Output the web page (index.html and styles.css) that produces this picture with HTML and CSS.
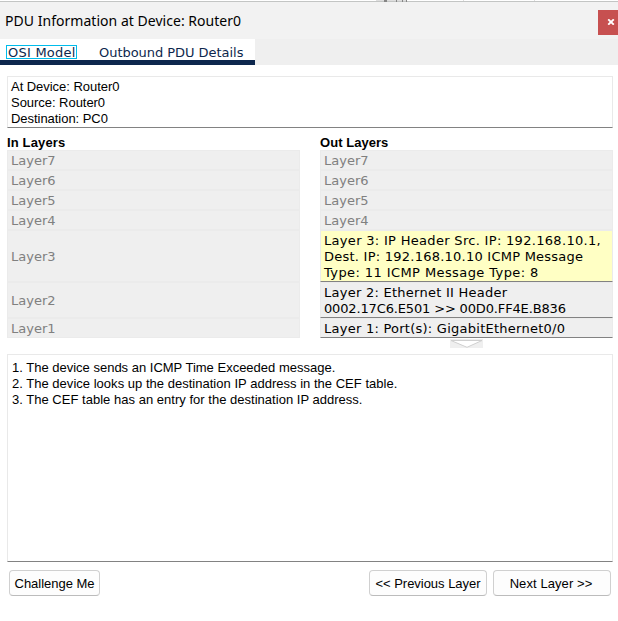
FILE: index.html
```
<!DOCTYPE html>
<html lang="en">
<head>
<meta charset="utf-8">
<title>PDU Information at Device: Router0</title>
<link rel="stylesheet" href="styles.css">
</head>
<body>
<svg class="top-edge" width="618" height="2" viewBox="0 0 618 2" shape-rendering="crispEdges">
  <path fill="#fff" d="M0 0h618v1H0z"/>
  <path fill="#c3c5c4" d="M0 1h618v1H0z"/>
  <path fill="#dedede" d="M376 0h30v1h-30zM463 0h1v1h-1zM534 0h1v1h-1z"/>
  <path fill="#858585" d="M384 0h3v2h-3zM396 0h1v2h-1zM402 0h1v2h-1zM406 0h1v2h-1z"/>
</svg>
<header class="titlebar">
  <h1 class="title">PDU Information at Device: Router0</h1>
  <button class="close" aria-label="Close">
    <svg width="8" height="6" viewBox="0 0 8 6"><path d="M1.2.3 6.8 5.7M6.8.3 1.2 5.7" stroke="#fff" stroke-width="1.8"/></svg>
  </button>
</header>
<nav class="tabbar">
  <div class="tabs">
    <span class="tab tab-osi">OSI Model</span>
    <span class="tab tab-out">Outbound PDU Details</span>
  </div>
</nav>
<main class="content">
  <section class="box info">
    <p>At Device: Router0</p>
    <p>Source: Router0</p>
    <p>Destination: PC0</p>
  </section>
  <div class="columns">
    <section>
      <h2 class="heading heading-in">In Layers</h2>
      <div class="layers">
        <div class="layer">Layer7</div>
        <div class="layer">Layer6</div>
        <div class="layer">Layer5</div>
        <div class="layer">Layer4</div>
        <div class="layer">Layer3</div>
        <div class="layer">Layer2</div>
        <div class="layer">Layer1</div>
      </div>
    </section>
    <section>
      <h2 class="heading">Out Layers</h2>
      <div class="layers">
        <div class="layer">Layer7</div>
        <div class="layer">Layer6</div>
        <div class="layer">Layer5</div>
        <div class="layer">Layer4</div>
        <div class="layer active selected"><p class="l3a">Layer 3: IP Header Src. IP: 192.168.10.1,</p><p class="l3b">Dest. IP: 192.168.10.10 ICMP Message</p><p class="l3c">Type: 11 ICMP Message Type: 8</p></div>
        <div class="layer active"><p class="l2a">Layer 2: Ethernet II Header</p><p class="l2b">0002.17C6.E501 &gt;&gt; 00D0.FF4E.B836</p></div>
        <div class="layer active"><p class="l1">Layer 1: Port(s): GigabitEthernet0/0</p></div>
      </div>
      <svg class="arrow" width="33" height="9" viewBox="0 0 33 9"><path fill="#efefef" d="M0 0h33v9H0z"/><path fill="#fff" stroke="#d0d0d0" d="M1 1.5h31L17 8.3z"/></svg>
    </section>
  </div>
  <section class="box steps">
    <p>1. The device sends an ICMP Time Exceeded message.</p>
    <p class="step-wide">2. The device looks up the destination IP address in the CEF table.</p>
    <p class="step-wide">3. The CEF table has an entry for the destination IP address.</p>
  </section>
  <footer class="actions">
    <button class="btn challenge">Challenge Me</button>
    <button class="btn">&lt;&lt; Previous Layer</button>
    <button class="btn next">Next Layer &gt;&gt;</button>
  </footer>
</main>
</body>
</html>
```
FILE: styles.css
```
* { box-sizing: border-box; margin: 0; padding: 0; }
body { width: 618px; height: 621px; background: #fff; color: #000; font: 13px/16px "Liberation Sans", sans-serif; overflow: hidden; white-space: nowrap; }
button { font: inherit; color: inherit; }
.top-edge { display: block; }
.titlebar { height: 37px; background: #f2f2f2; display: flex; justify-content: space-between; align-items: flex-start; }
.title { font: 14px/20px "Noto Sans", sans-serif; padding: 9px 0 0 5px; letter-spacing: .03px; }
.close { width: 20px; height: 25px; margin-top: 8px; border: 0; background: #c75050; padding: 0 0 1px 5px; display: flex; align-items: center; justify-content: center; }
.tabbar { height: 26px; background: #efefef; }
.tabs { width: 255px; height: 26px; background: #fff; border-bottom: 5px solid #0d274d; display: flex; padding: 6px 0 0 6px; gap: 20px; color: #0d274d; font: 13px/13px "DejaVu Sans", sans-serif; }
.tab { height: 14px; border: 1px solid transparent; padding-left: 1px; line-height: 13px; }
.tab-osi { width: 71px; border-color: #00bceb; letter-spacing: .24px; }
.tab-out { letter-spacing: -.04px; }
.content { padding: 11px 5px 0 7px; }
.box { border: 1px solid #e9e9e9; border-bottom-color: #828282; }
.info { height: 52px; padding: 2px 3px; letter-spacing: -.04px; }
.columns { display: grid; grid-template-columns: 293px 293px; gap: 20px; height: 226px; padding-top: 6px; }
.heading { font: bold 13px/16px "Liberation Sans", sans-serif; height: 16px; padding-top: 1px; letter-spacing: .04px; }
.heading-in { letter-spacing: .15px; }
.layers { display: grid; grid-template-rows: 20px 20px 20px 20px 52px 36px 20px; }
.layer { display: flex; flex-direction: column; justify-content: center; padding: 2px 0 0 3px; background: #efefef; border: 1px solid #ebebeb; color: #808080; font: 13px/16px "DejaVu Sans", sans-serif; }
.active { color: #000; border-bottom-color: #828282; }
.selected { background: #ffffc4; }
.l3a { letter-spacing: .31px; }
.l3b { letter-spacing: .24px; }
.l3c { letter-spacing: .41px; }
.l2a { letter-spacing: .26px; }
.l2b { letter-spacing: -.15px; }
.l1 { letter-spacing: .25px; }
.arrow { display: block; margin: 1px 0 0 130px; }
.steps { height: 208px; padding: 5px 4px; }
.step-wide { letter-spacing: .02px; }
.actions { display: flex; padding: 8px 2px 0; gap: 6px; }
.btn { width: 118px; height: 26px; border: 1px solid #d0d0d0; border-bottom-color: #bcbcbc; border-radius: 4px; background: #fdfdfd; padding-top: 2px; letter-spacing: -.03px; }
.challenge { width: 91px; margin-right: auto; }
.next { padding-right: 2px; letter-spacing: .08px; }
```
